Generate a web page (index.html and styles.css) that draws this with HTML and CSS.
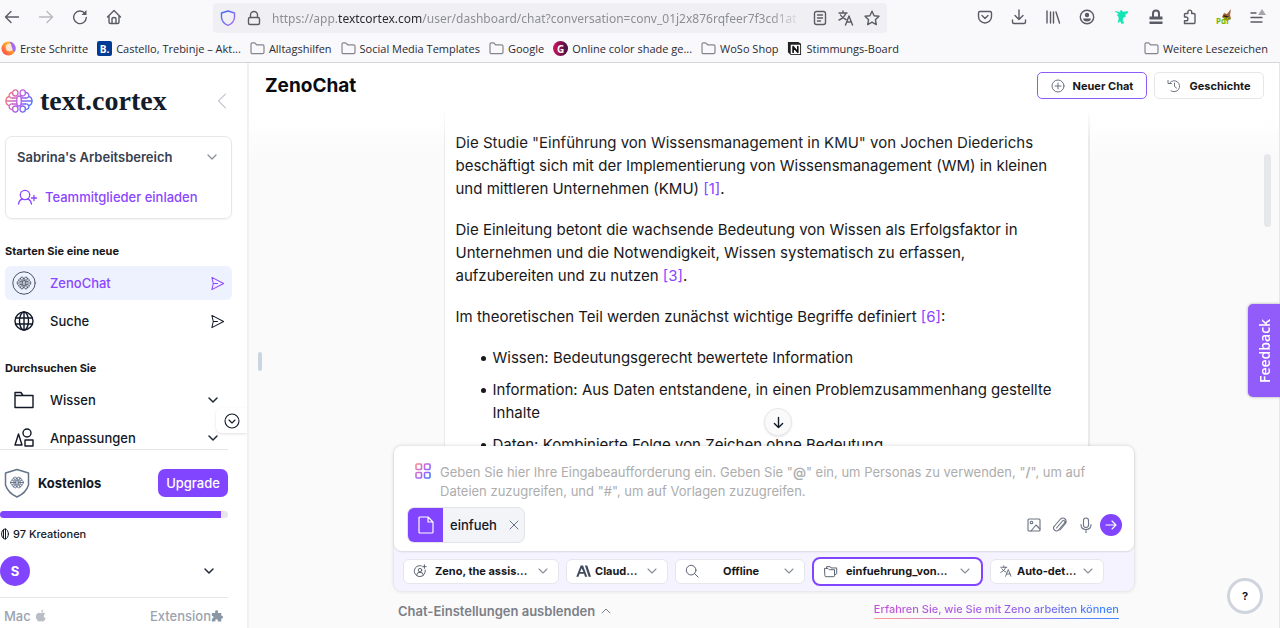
FILE: index.html
```html
<!DOCTYPE html>
<html lang="de">
<head>
<meta charset="utf-8">
<title>ZenoChat</title>
<link rel="stylesheet" href="styles.css">
</head>
<body>
<svg class="defs" aria-hidden="true">
  <defs>
    <linearGradient id="brand" gradientUnits="userSpaceOnUse" x1="0" y1="6" x2="28" y2="20"><stop offset="0" stop-color="#ff7a6b"/><stop offset=".5" stop-color="#b45cf0"/><stop offset="1" stop-color="#2f80ff"/></linearGradient>
    <linearGradient id="tiles" gradientUnits="userSpaceOnUse" x1="0" y1="0" x2="18" y2="14"><stop offset="0" stop-color="#ff8f7a"/><stop offset=".5" stop-color="#b862f5"/><stop offset="1" stop-color="#2f80ff"/></linearGradient>
    <linearGradient id="shieldfill" x1="0" y1="0" x2="1" y2="1"><stop offset="0" stop-color="#3b6cf0"/><stop offset="1" stop-color="#b06cf5"/></linearGradient>
    <linearGradient id="fox" x1="0" y1="1" x2="1" y2="0"><stop offset="0" stop-color="#ff2f5b"/><stop offset=".5" stop-color="#ff9a2a"/><stop offset="1" stop-color="#ffe04a"/></linearGradient>
  </defs>
  <symbol id="brain" viewBox="0 0 28 24">
    <g fill="none" stroke-linecap="round" stroke-linejoin="round">
      <rect x="11.800" y="7" width="4.400" height="10" rx="2.200"/>
      <path d="M11.800 9H7.500M11.800 15H7.500M16.200 9h4.300M16.200 15h4.300M1 12h10.500M16.500 12H27"/>
      <ellipse cx="10.300" cy="3.900" rx="2.700" ry="3.100"/><ellipse cx="17.700" cy="3.900" rx="2.700" ry="3.100"/><ellipse cx="10.300" cy="20.100" rx="2.700" ry="3.100"/><ellipse cx="17.700" cy="20.100" rx="2.700" ry="3.100"/>
      <path d="M7.500 9C3 9.500 3 3.500 7.500 3.500M7.500 15C3 14.500 3 20.500 7.500 20.500M20.500 9C25 9.500 25 3.500 20.500 3.500M20.500 15c4.500-.5 4.500 5.500 0 5.500M4 7.500c-4 1-4 8 0 9M24 7.500c4 1 4 8 0 9"/>
    </g>
  </symbol>
  <symbol id="down" viewBox="0 0 12 12"><path d="M2 4l4 4 4-4"/></symbol>
  <symbol id="folder" viewBox="0 0 16 14"><path d="M1 11V2.500Q1 1 2.500 1H5l2 2h6.500Q15 3 15 4.500V11q0 1.500-1.500 1.500h-11Q1 12.500 1 11z"/></symbol>
  <symbol id="send" viewBox="0 0 16 16"><path d="M2 1.500 14.500 8 2 14.500 3.500 8zM3.500 8H8"/></symbol>
  <symbol id="translate" viewBox="0 0 16 16"><path d="M1 3h8M5 1v2M8 3Q6 8 1 10M2.500 5Q4 8 8 9.500M7.500 15l3.500-9 3.500 9M9 12h4.500"/></symbol>
</svg>

<div class="browser">
  <div class="toolbar">
    <div class="nav-icons">
      <button aria-label="Zurück"><svg class="ic" viewBox="0 0 16 16"><path d="M14.500 8h-13M7 2.500 1.500 8 7 13.500"/></svg></button>
      <button aria-label="Vor" class="faded"><svg class="ic" viewBox="0 0 16 16"><path d="M1.500 8h13M9 2.500 14.500 8 9 13.500"/></svg></button>
      <button aria-label="Neu laden"><svg class="ic" viewBox="0 0 16 16"><path d="M13 4.500A6.300 6.300 0 1 0 14.300 8.500"/><path d="M14.500 1v5h-5z" fill="currentColor" stroke="none"/></svg></button>
      <button aria-label="Startseite"><svg class="ic" viewBox="0 0 16 16"><path d="M1.500 8 8 1.500 14.500 8M3 7v6q0 1.500 1.500 1.500h7Q13 14.500 13 13V7M6 14.500V10q0-1.500 2-1.500t2 1.500v4.500"/></svg></button>
    </div>
    <div class="urlbar">
      <svg class="ic shield" viewBox="0 0 16 16"><path d="M8 1 14.500 3v4.500Q14 13 8 15.300 2 13 1.500 7.500V3z"/></svg>
      <svg class="ic" viewBox="0 0 16 16"><rect x="2.500" y="7.500" width="11" height="7" rx="1.500"/><path d="M4.500 7.500V5a3.500 3.500 0 0 1 7 0v2.500"/></svg>
      <span class="url">https://app.<b>textcortex.com</b>/user/dashboard/chat?conversation=conv_01j2x876rqfeer7f3cd1at</span>
      <svg class="ic" viewBox="0 0 16 16"><rect x="2.500" y="1.500" width="11" height="13" rx="2"/><path d="M5.500 5h5M5.500 8h5M5.500 11h3"/></svg>
      <svg class="ic"><use href="#translate"/></svg>
      <svg class="ic" viewBox="0 0 16 16"><path d="m8 1.200 2.100 4.500 4.900.6-3.600 3.400.9 4.900L8 12.200l-4.300 2.400.9-4.900L1 6.300l4.900-.6z"/></svg>
    </div>
    <div class="tools">
      <svg class="ic" viewBox="0 0 16 16"><path d="M3 2.500h10q1.500 0 1.500 1.500v3.500a6.500 6.500 0 0 1-13 0V4Q1.500 2.500 3 2.500zM5 6.500l3 3 3-3"/></svg>
      <svg class="ic" viewBox="0 0 16 16"><path d="M8 1v9.500M4 6.500l4 4 4-4M1.500 11v2q0 1.500 1.500 1.500h10q1.500 0 1.500-1.500v-2"/></svg>
      <svg class="ic" viewBox="0 0 16 16"><path d="M2 2v12M5.500 3v11M8.500 3v11M11 3l3.500 11"/></svg>
      <svg class="ic" viewBox="0 0 16 16"><circle cx="8" cy="8" r="6.700"/><circle cx="8" cy="6" r="2.200" fill="currentColor" stroke="none"/><path d="M4 9.500h8Q11.500 12.500 8 12.500T4 9.500z" fill="currentColor" stroke="none"/></svg>
      <svg class="ic" viewBox="0 0 16 16"><path d="M1.500 2.500 6 3.500 7 1l2 2 5-.500-1 2-2 .5.500 2.500-2.500 1L8.500 12l1.500 2-2.500.5L6.500 12 4 13.500 5 10 4.500 7 3 6l2-1z" fill="#12e5b4" stroke="#12e5b4" stroke-width=".6"/></svg>
      <svg class="ic" viewBox="0 0 16 16"><path d="M5 8V4.500a3 3 0 0 1 6 0V8" stroke-width="2"/><path d="M1.500 7.500h13v3h-13zM1.500 12.500h13v2.500h-13z" fill="currentColor" stroke="none"/></svg>
      <svg class="ic" viewBox="0 0 16 16"><path d="M3 14.500h9q1 0 1-1V5.500q0-1-1-1H9.700V3a1.900 1.900 0 0 0-3.800 0v1.500H3.500q-1 0-1 1V8H4a1.900 1.900 0 0 1 0 3.800H2.500v2.700z"/></svg>
      <svg class="ic" viewBox="0 0 16 16"><path d="m6 8 2-4 3 1 4-5-1 6 1 4-4 2z" fill="#a4643a" stroke="none"/><path d="m8 7 4 1" stroke="#2b211d"/><text x="0" y="15" class="pdf">Pdf</text></svg>
      <svg class="ic" viewBox="0 0 16 16"><path d="M1 4h5M1 8.500h11M1 13h11"/><path d="m12 0 4 6H8z" fill="#a5a5aa" stroke="none"/></svg>
    </div>
  </div>
  <nav class="bookmarks">
    <a href="#"><svg class="fav" viewBox="0 0 16 16"><circle cx="8" cy="8" r="7.500" fill="url(#fox)"/><circle cx="9" cy="7" r="4" fill="#fff" opacity=".75"/><path d="M9 .5A7.500 7.500 0 0 1 15 11Q13 13 12 8T9 .5z" fill="#a26af5"/></svg>Erste Schritte</a>
    <a href="#"><span class="fav booking">B.</span>Castello, Trebinje – Akt...</a>
    <a href="#"><svg class="bf"><use href="#folder"/></svg>Alltagshilfen</a>
    <a href="#"><svg class="bf"><use href="#folder"/></svg>Social Media Templates</a>
    <a href="#"><svg class="bf"><use href="#folder"/></svg>Google</a>
    <a href="#"><span class="fav shade">G</span>Online color shade ge...</a>
    <a href="#"><svg class="bf"><use href="#folder"/></svg>WoSo Shop</a>
    <a href="#"><svg class="fav" viewBox="0 0 16 16"><path d="M1 1h11l3 2v12H4l-3-3z" fill="#222"/><path d="M4 4h10v10H4z" fill="#fff"/><path d="M6.500 12V6l5 6V6" fill="none" stroke="#111" stroke-width="1.800"/></svg>Stimmungs-Board</a>
    <a href="#" class="more"><svg class="bf"><use href="#folder"/></svg>Weitere Lesezeichen</a>
  </nav>
</div>

<div class="app">
  <aside class="sidebar">
    <div class="logo-row">
      <svg class="logo"><use href="#brain"/></svg>
      <span class="wordmark">text.cortex</span>
      <button class="collapse" aria-label="Seitenleiste einklappen"><svg viewBox="0 0 10 16"><path d="M8.500 1 1.500 8l7 7"/></svg></button>
    </div>
    <div class="workspace">
      <label class="ws-row"><select aria-label="Arbeitsbereich"><option>Sabrina's Arbeitsbereich</option></select><svg class="chev"><use href="#down"/></svg></label>
      <a href="#" class="ws-row invite"><svg viewBox="0 0 20 16"><circle cx="8" cy="6" r="4.700"/><path d="M1.500 15q1-4.500 4-5M14.500 15q-1-4.500-4-5M17 6.500v5M14.500 9h5"/></svg>Teammitglieder einladen</a>
    </div>
    <div class="nav">
      <h2>Starten Sie eine neue</h2>
      <a href="#" class="item active"><svg class="main-ic" viewBox="0 0 24 24"><circle cx="12" cy="12" r="11.200" stroke="#4b5563"/><g stroke="#4b5563" stroke-width="1.600"><use href="#brain" x="4.500" y="5" width="15" height="14"/></g></svg><span>ZenoChat</span><svg class="end"><use href="#send"/></svg></a>
      <a href="#" class="item"><svg class="main-ic small" viewBox="0 0 20 20"><circle cx="10" cy="10" r="9"/><ellipse cx="10" cy="10" rx="4.500" ry="9"/><path d="M10 1v18M1.500 7h17M1.500 13h17"/></svg><span>Suche</span><svg class="end"><use href="#send"/></svg></a>
      <h2 class="second">Durchsuchen Sie</h2>
      <a href="#" class="item"><svg class="main-ic small" viewBox="0 0 20 20"><path d="M1 17.500v-15h6l2 3h10v12zM1 5.500h8"/></svg><span>Wissen</span><svg class="chev dark"><use href="#down"/></svg></a>
      <a href="#" class="item"><svg class="main-ic small" viewBox="0 0 20 20"><path d="M4.500 6 1 17h7z"/><circle cx="13" cy="5" r="4"/><path d="M11 12h8v6h-8z"/></svg><span>Anpassungen</span><svg class="chev dark"><use href="#down"/></svg></a>
    </div>
    <button class="more-tab" aria-label="Mehr anzeigen"><svg viewBox="0 0 16 16"><circle cx="8" cy="8" r="7"/><path d="m5 7 3 3 3-3"/></svg></button>
    <div class="account">
      <div class="plan"><svg viewBox="0 0 26 30"><path d="M13 1.500 24.500 5v12Q22 25 13 29 4 25 1.500 17V5z"/><g stroke-width="2"><use href="#brain" x="6" y="8.500" width="14" height="12"/></g></svg><strong>Kostenlos</strong><button class="upgrade">Upgrade</button></div>
      <div class="bar" role="progressbar" aria-valuenow="97" aria-label="Kreationen"><div style="width:97%"></div></div>
      <div class="credits"><svg viewBox="0 0 8 12"><ellipse cx="4" cy="6" rx="3.400" ry="5"/><path d="M2.500 2v8M4.500 1v10"/></svg>97 Kreationen</div>
      <button class="user"><span class="avatar">S</span><svg class="chev dark"><use href="#down"/></svg></button>
    </div>
    <div class="platforms"><a href="#">Mac <svg viewBox="0 0 12 14"><path d="M8.500.5Q6 1 6 3.500 8.500 3.500 8.500.5zM6 4.500Q2.500 3 1 6t1 6q1.500 2.500 4 1 2.500 1.500 4-1l1-2Q8.500 9 9 7t1.500-2Q8.500 3 6 4.500z" fill="#b9bec6"/></svg></a><a href="#">Extension<svg viewBox="0 0 14 14"><path d="M1 4h4Q4 1 6.500.8T8 4h4v3.500q2-.5 2 1.500t-2 1.500V14H8q.5-2.500-1.500-2.500T5 14H1v-3.500q2 0 2-1.500T1 7.500z" fill="#8b96a5"/></svg></a></div>
  </aside>

  <main class="main">
    <header class="head"><h1>ZenoChat</h1>
      <button class="hbtn primary"><svg viewBox="0 0 14 14"><circle cx="7" cy="7" r="6"/><path d="M7 4v6M4 7h6"/></svg>Neuer Chat</button>
      <button class="hbtn"><svg viewBox="0 0 14 14"><path d="M3 3.500A5.500 5.500 0 1 1 4 11.800M1 1.500V4.500h3.500M7.500 4v3.500L9.500 9"/></svg>Geschichte</button>
    </header>
    <div class="scroller">
      <article class="message">
        <p>Die Studie "Einführung von Wissensmanagement in KMU" von Jochen Diederichs beschäftigt sich mit der Implementierung von Wissensmanagement (WM) in kleinen und mittleren Unternehmen (KMU) <a href="#">[1]</a>.</p>
        <p>Die Einleitung betont die wachsende Bedeutung von Wissen als Erfolgsfaktor in Unternehmen und die Notwendigkeit, Wissen systematisch zu erfassen, aufzubereiten und zu nutzen <a href="#">[3]</a>.</p>
        <p>Im theoretischen Teil werden zunächst wichtige Begriffe definiert <a href="#">[6]</a>:</p>
        <ul>
          <li>Wissen: Bedeutungsgerecht bewertete Information</li>
          <li>Information: Aus Daten entstandene, in einen Problemzusammenhang gestellte Inhalte</li>
          <li>Daten: Kombinierte Folge von Zeichen ohne Bedeutung</li>
        </ul>
      </article>
      <div class="fade"></div>
      <button class="to-end" aria-label="Nach unten"><svg viewBox="0 0 12 14"><path d="M6 1.500v11M1.500 8 6 12.500 10.500 8"/></svg></button>
    </div>
    <div class="composer">
      <div class="input-card">
        <div class="prompt">
          <svg class="tiles" viewBox="0 0 16 16"><rect x="1" y="1" width="5.500" height="5.500" rx="1"/><rect x="9.500" y="1" width="5.500" height="5.500" rx="1"/><rect x="1" y="9.500" width="5.500" height="5.500" rx="1"/><rect x="9.500" y="9.500" width="5.500" height="5.500" rx="1"/></svg>
          <div class="stack"><textarea id="prompt"></textarea><label for="prompt">Geben Sie hier Ihre Eingabeaufforderung ein. Geben Sie "<b>@</b>" ein, um Personas zu verwenden, "<b>/</b>", um auf Dateien zuzugreifen, und "#", um auf Vorlagen zuzugreifen.</label></div>
        </div>
        <div class="attach-row">
          <div class="file"><span class="file-ic"><svg viewBox="0 0 16 18"><path d="M1 2q0-1 1-1h8l5 5v10q0 1-1 1H2q-1 0-1-1zM10 1v5h5"/></svg></span><span>einfueh</span><button aria-label="Datei entfernen"><svg viewBox="0 0 10 10"><path d="m1 1 8 8M9 1 1 9"/></svg></button></div>
          <div class="actions">
            <button aria-label="Bild"><svg viewBox="0 0 16 16"><rect x="2" y="2" width="12" height="12" rx="1"/><circle cx="5.500" cy="5.500" r="1.300"/><path d="m5 14 5-6 4 4"/></svg></button>
            <button aria-label="Anhang"><svg viewBox="0 0 16 16"><path d="m4.500 11 6-7q1-1 2 0t0 2L6.500 13q-2 2-4 0t0-4l6-7q2.500-2 4.500 0t.5 4.500L8 13"/></svg></button>
            <button aria-label="Mikrofon"><svg viewBox="0 0 16 16"><rect x="5.500" y="1" width="5" height="9.500" rx="2.500"/><path d="M3 7.500q0 5 5 5t5-5M8 12.500V16"/></svg></button>
            <button aria-label="Senden" class="go"><svg viewBox="0 0 12 12"><path d="M1 6h10M7 2l4 4-4 4"/></svg></button>
          </div>
        </div>
      </div>
      <div class="pills">
        <label class="pill persona"><svg viewBox="0 0 16 16"><path d="M9.500 2A6.300 6.300 0 1 0 14 7M13 1v4M11 3h4"/><circle cx="8" cy="7" r="2"/><path d="M4.500 13V12q0-2.500 3.500-2.500t3.500 2.500v1"/></svg><select aria-label="Persona"><option>Zeno, the assis...</option></select><svg class="chev"><use href="#down"/></svg></label>
        <label class="pill model"><svg viewBox="0 0 16 14"><path d="M5 1h2.500l4.500 12H9.600L8.600 10H3.700l-1 3H.3zm1 3L4.400 8H8zM9.500 1H12l4 12h-2.500z" fill="#414a5c" stroke="none"/></svg><select aria-label="Modell"><option>Claud...</option></select><svg class="chev"><use href="#down"/></svg></label>
        <label class="pill web"><svg viewBox="0 0 16 16"><circle cx="7" cy="7" r="5.500"/><path d="m11 11 4 4"/></svg><select aria-label="Websuche"><option>Offline</option></select><svg class="chev"><use href="#down"/></svg></label>
        <label class="pill source"><svg viewBox="0 0 16 16"><path d="M1 5h3.500L6 6.500h6v7q0 1-1 1H2q-1 0-1-1zM3 5V3h4l1 1.500h6.500V11q0 1-2 1"/></svg><select aria-label="Wissensquelle"><option>einfuehrung_von...</option></select><svg class="chev"><use href="#down"/></svg></label>
        <label class="pill lang"><svg><use href="#translate"/></svg><select aria-label="Sprache"><option>Auto-det...</option></select><svg class="chev"><use href="#down"/></svg></label>
      </div>
    </div>
    <footer class="foot"><button>Chat-Einstellungen ausblenden <svg viewBox="0 0 12 12"><path d="m2 8 4-4 4 4"/></svg></button><a href="#"><span>Erfahren Sie, wie Sie mit Zeno arbeiten können</span></a></footer>
    <div class="handle"></div>
    <div class="thumb"></div>
    <button class="feedback">Feedback</button>
    <button class="help">?</button>
  </main>
</div>
</body>
</html>
```
FILE: styles.css
```css
* { box-sizing: border-box; }
body { margin: 0; height: 100vh; display: flex; flex-direction: column; overflow: hidden; font-family: Inter, "Liberation Sans", sans-serif; color: #111827; background: #fff; }
button, select, textarea { font: inherit; color: inherit; border: 0; padding: 0; margin: 0; background: none; }
select { appearance: none; flex: 1; min-width: 0; }
a { color: inherit; text-decoration: none; }
svg { flex: none; fill: none; stroke: currentColor; stroke-linecap: round; stroke-linejoin: round; }
h1, h2, p, ul { margin: 0; }
.defs { position: absolute; width: 0; height: 0; }

/* Browser frame */
.browser { flex: none; height: 63px; background: #f9f9fb; border-bottom: 1px solid #d5d5da; font-family: "Open Sans", sans-serif; color: #2b2a33; }
.toolbar { height: 34px; display: flex; align-items: center; color: #5b5b66; }
.ic { width: 16px; height: 16px; stroke-width: 1.4; display: block; }
.nav-icons { flex: none; display: flex; gap: 18px; padding-left: 4px; width: 213px; }
.nav-icons .faded { opacity: .4; }
.urlbar { display: flex; align-items: center; gap: 10px; flex: 1; min-width: 0; height: 30px; margin-top: 2px; padding: 0 7px; background: #f0f0f4; border-radius: 4px; }
.urlbar .shield { stroke: url(#shieldfill); }
.url { flex: 1; min-width: 0; overflow: hidden; white-space: nowrap; font-family: "Noto Sans", sans-serif; font-size: 12px; color: #8d8d96; mask-image: linear-gradient(to left, transparent, #000 32px); }
.url b { font-weight: 400; color: #2b2a33; }
.tools { flex: none; display: flex; justify-content: space-between; width: 393px; padding: 0 14px 0 90px; }
.pdf { font: bold 8px "Noto Sans", sans-serif; fill: #6fb800; stroke: none; }
.bookmarks { height: 29px; display: flex; align-items: center; gap: 9px; padding: 0 12px 0 1px; font-size: 11px; white-space: nowrap; }
.bookmarks a { display: flex; align-items: center; gap: 4px; }
.bookmarks .more { margin-left: auto; }
.fav { width: 15px; height: 15px; stroke: none; }
.bf { width: 15px; height: 13px; color: #85858e; stroke-width: 1.3; }
.booking, .shade { display: flex; align-items: center; justify-content: center; color: #fff; font-size: 10px; font-weight: 700; }
.booking { background: #003b95; border-radius: 2px; }
.shade { background: linear-gradient(90deg, #d3145c, #3a1040); border-radius: 50%; }

.app { flex: 1; min-height: 0; display: flex; }

/* Sidebar */
.sidebar { position: relative; width: 249px; flex: none; display: flex; flex-direction: column; border-right: 2px solid #f1f1f3; }
.logo-row { flex: none; display: flex; align-items: center; height: 73px; padding: 3px 20px 0 5px; }
.logo { width: 28px; height: 24px; stroke: url(#brand); stroke-width: 1.3; }
.wordmark { margin-left: 7px; font: bold 28px/32px "Liberation Serif", serif; color: #141c2b; }
.collapse { margin-left: auto; color: #9ca3af; }
.collapse svg { width: 10px; height: 16px; display: block; }
.workspace { flex: none; margin: 0 15px 0 5px; padding: 0 13px 1px 11px; border: 1px solid #e5e7eb; border-radius: 7px; box-shadow: 0 1px 2px #0000000d; font-size: 13px; font-weight: 500; }
.ws-row { display: flex; align-items: center; height: 40px; color: #374151; }
.ws-row select { font-weight: 600; }
.ws-row.invite { gap: 8px; color: #8b46ff; }
.invite svg { width: 20px; height: 16px; stroke-width: 1.3; }
.chev { width: 12px; height: 12px; color: #8a9099; stroke-width: 1.3; pointer-events: none; }
.chev.dark { color: #1f2937; stroke-width: 1.5; }
.nav { flex: 1; min-height: 0; overflow: hidden; padding: 22px 15px 0 5px; }
.nav h2 { font-size: 11px; line-height: 20px; font-weight: 700; margin-bottom: 5px; color: #18181b; }
.nav .second { margin-top: 20px; }
.item { display: flex; align-items: center; height: 34px; margin-bottom: 4px; padding: 0 13px 0 7px; border-radius: 6px; font-size: 13px; font-weight: 500; }
.item span { flex: 1; margin-left: 14px; }
.main-ic { width: 24px; height: 24px; stroke-width: 1; }
.main-ic.small { width: 20px; height: 20px; margin: 0 2px; stroke-width: 1.4; }
.active { background: #eef2ff; color: #8b46ff; }
.end { width: 15px; height: 15px; margin-right: -6px; stroke-width: 1.1; }
.more-tab { position: absolute; right: 0; top: 345px; width: 31px; height: 25px; display: grid; place-items: center; background: #fff; border-radius: 6px 0 0 6px; box-shadow: 0 1px 3px #0000001f; clip-path: inset(-4px 0 -4px -4px); }
.more-tab svg { width: 16px; height: 16px; stroke-width: 1.1; }
.account { flex: none; margin-right: 19px; height: 149px; border-top: 1px solid #e5e7eb; border-bottom: 1px solid #e5e7eb; }
.plan { display: flex; align-items: center; height: 66px; padding-left: 4px; }
.plan > svg { width: 26px; height: 30px; color: #64748b; stroke-width: 1.5; }
.plan strong { flex: 1; margin-left: 8px; font-size: 13px; font-weight: 700; }
.upgrade { width: 70px; height: 28px; border-radius: 7px; background: #8145ff; color: #fff; font-size: 13px; font-weight: 500; }
.bar { height: 7px; margin-top: -5px; border-radius: 4px; background: #e5e7eb; overflow: hidden; }
.bar div { height: 100%; background: #8145ff; }
.credits { display: flex; align-items: center; gap: 4px; height: 32px; padding-left: 1px; font-size: 11px; font-weight: 500; }
.credits svg { width: 8px; height: 12px; }
.user { display: flex; align-items: center; justify-content: space-between; width: 100%; height: 42px; padding-right: 13px; }
.avatar { display: grid; place-items: center; width: 30px; height: 30px; border-radius: 50%; background: #8145ff; color: #fff; font-size: 13px; font-weight: 700; }
.platforms { flex: none; display: flex; align-items: center; justify-content: space-between; height: 30px; padding: 5px 24px 0 4px; font-size: 13px; font-weight: 500; color: #9ca3af; }
.platforms a { display: flex; align-items: center; }
.platforms a:first-child { gap: 4px; }
.platforms svg { width: 12px; height: 13px; stroke: none; }

/* Chat */
.main { position: relative; flex: 1; min-width: 0; display: flex; flex-direction: column; background: #fafafa; border-right: 1px solid #e5e7eb; }
.head { flex: none; display: flex; align-items: center; gap: 7px; height: 45px; padding: 0 15px 0 16px; background: #fff; }
.head h1 { flex: 1; font-size: 19px; font-weight: 700; color: #0b0b0f; }
.hbtn { display: flex; align-items: center; justify-content: center; gap: 8px; width: 110px; height: 27px; border: 1px solid #e5e7eb; border-radius: 5px; background: #fff; font-size: 11px; font-weight: 700; color: #18181b; }
.hbtn svg { width: 14px; height: 14px; color: #6b7280; stroke-width: 1; }
.primary { border-color: #8b5cf6; }
.scroller { position: relative; flex: 1; min-height: 0; display: flex; justify-content: center; background: linear-gradient(#fff, #fafafa 52px); }
.message { width: 646px; margin-left: 5px; padding: 23px 24px 0 11px; overflow: hidden; background: #fff; border: solid #e9eaee; border-width: 0 2px 0 1px; font-size: 15px; line-height: 23px; color: #18181b; }
.message p { margin-bottom: 18px; }
.message a { color: #8b46ff; }
.message ul { padding-left: 25px; list-style: none; }
.message li { display: flex; gap: 7px; margin-bottom: 9px; }
.message li::before { content: ""; flex: none; width: 5px; height: 5px; margin-top: 10px; border-radius: 50%; background: currentColor; }
.fade { position: absolute; inset: 0 0 auto; height: 34px; background: linear-gradient(#fff, #fff0); pointer-events: none; }
.to-end { position: absolute; left: 50%; bottom: 10px; width: 28px; height: 28px; display: grid; place-items: center; border-radius: 50%; background: #fafafa; border: 1px solid #e8e8ec; box-shadow: 0 1px 2px #0000001a; }
.to-end svg { width: 11px; height: 13px; stroke-width: 1.5; }
.composer { flex: none; position: relative; width: 740px; align-self: center; border-radius: 8px; background: #f5f3ff; box-shadow: 0 0 4px #00000029; }
.input-card { border-radius: 8px; padding: 17px 12px 8px 13px; background: #fff; box-shadow: 0 1px 2px #0000001f; }
.prompt { display: flex; gap: 9px; padding-left: 8px; }
.prompt .tiles { width: 16px; height: 16px; stroke: url(#tiles); stroke-width: 1.6; }
.stack { flex: 1; display: grid; padding-right: 20px; font-size: 13px; line-height: 19px; color: #adadad; }
.stack > * { grid-area: 1 / 1; }
.stack textarea { resize: none; width: 100%; height: 38px; outline: 0; color: #18181b; }
.stack label { pointer-events: none; }
.stack b { font-weight: 600; }
.attach-row { display: flex; align-items: center; justify-content: space-between; margin-top: 6px; }
.file { display: flex; align-items: center; gap: 7px; height: 36px; border: 1px solid #e2e4ea; border-radius: 7px; overflow: hidden; background: #f3f4f8; font-size: 13px; font-weight: 500; }
.file-ic { display: grid; place-items: center; width: 35px; height: 36px; background: #8145ff; color: #fff; }
.file-ic svg { width: 16px; height: 18px; stroke-width: 1.2; }
.file button { padding: 0 5px; color: #64748b; }
.file button svg { width: 10px; height: 10px; display: block; }
.actions { display: flex; align-items: center; gap: 10px; color: #6b7280; }
.actions svg { width: 16px; height: 16px; display: block; stroke-width: 1.1; }
.actions .go { display: grid; place-items: center; width: 22px; height: 22px; margin-left: -4px; border-radius: 50%; background: #8145ff; color: #fff; }
.actions .go svg { width: 12px; height: 12px; }
.pills { display: flex; align-items: center; gap: 7px; height: 40px; padding: 0 9px; }
.pill { display: flex; align-items: center; gap: 8px; height: 25px; padding: 0 9px; border: 1px solid #e5e7eb; border-radius: 6px; background: #fff; font-size: 11px; font-weight: 700; color: #18181b; }
.pill svg { width: 14px; height: 14px; color: #555d6b; stroke-width: 1.1; }
.pill .chev { width: 12px; height: 12px; color: #8a9099; }
.persona { width: 156px; }
.model { width: 102px; gap: 4px; }
.model > svg:first-child { width: 15px; }
.web { width: 130px; }
.web select { text-align: center; }
.source { width: 171px; height: 29px; padding: 0 10px; border: 2px solid #8145ff; border-radius: 8px; }
.lang { width: 114px; gap: 5px; }
.lang svg:first-child { width: 12px; height: 12px; }
.foot { flex: none; width: 734px; align-self: center; display: flex; align-items: center; justify-content: space-between; height: 37px; padding: 2px 12px 0 1px; }
.foot button { display: flex; align-items: center; gap: 5px; font-size: 13px; font-weight: 600; color: #7b7f87; }
.foot button svg { width: 12px; height: 12px; }
.foot a { padding-bottom: 1px; font-size: 11px; font-weight: 500; line-height: 15px; border-bottom: 1px solid; border-image: linear-gradient(90deg, #ff9f8f, #c07af0 45%, #3b8bff) 1; }
.foot a span { color: transparent; background: linear-gradient(90deg, #c44fd8, #9d5ee8 55%, #2f86ff); background-clip: text; }
.handle { position: absolute; left: 9px; top: 289px; width: 4px; height: 19px; border-radius: 2px; background: #cbd5e1; }
.thumb { position: absolute; right: 8px; top: 91px; width: 7px; height: 73px; border-radius: 4px; background: #e5e7eb; }
.feedback { position: absolute; right: -1px; top: 241px; width: 32px; height: 93px; writing-mode: vertical-rl; transform: rotate(180deg); border-radius: 0 5px 5px 0; background: #915cfa; color: #fff; font: 600 14px "Open Sans", sans-serif; box-shadow: 0 0 3px #0005; }
.help { position: absolute; right: 16px; bottom: 14px; width: 36px; height: 36px; border-radius: 50%; border: 3px solid #cfd4dd; background: #fff; font-size: 11px; font-weight: 700; }
```
